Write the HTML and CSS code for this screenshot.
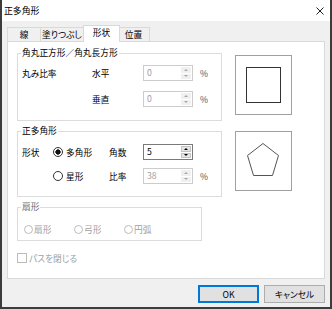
FILE: index.html
```html
<!DOCTYPE html>
<html lang="ja">
<head>
  <meta charset="UTF-8">
  <meta name="viewport" content="width=device-width, initial-scale=1.0">
  <title>正多角形</title>
  <link rel="stylesheet" href="styles.css">
</head>
<body>
  <div class="window">
    <div class="titlebar">
      <span class="title">正多角形</span>
      <svg class="close" width="8" height="8" viewBox="0 0 8 8">
        <path d="M0.5 0.5L7.5 7.5M7.5 0.5L0.5 7.5" stroke="#222" stroke-width="1"/>
      </svg>
    </div>
    <div class="dialog">
      <div class="tabs">
        <div class="tab tab-line">線</div>
        <div class="tab tab-fill">塗りつぶし</div>
        <div class="tab tab-shape">形状</div>
        <div class="tab tab-pos">位置</div>
      </div>
      <div class="panel">
        <div class="left">
          <fieldset class="group round">
            <legend>角丸正方形／角丸長方形</legend>
            <div class="row">
              <span>丸み比率</span>
              <span>水平</span>
              <div class="spin disabled">
                <span class="val">0</span>
                <span class="arrows"><i class="up"></i><i class="down"></i></span>
              </div>
              <span class="unit">%</span>
            </div>
            <div class="row">
              <span></span>
              <span>垂直</span>
              <div class="spin disabled">
                <span class="val">0</span>
                <span class="arrows"><i class="up"></i><i class="down"></i></span>
              </div>
              <span class="unit">%</span>
            </div>
          </fieldset>

          <fieldset class="group poly">
            <legend>正多角形</legend>
            <div class="row">
              <span>形状</span>
              <label class="opt"><span class="radio checked"></span>多角形</label>
              <span>角数</span>
              <div class="spin">
                <span class="val">5</span>
                <span class="arrows"><i class="up"></i><i class="down"></i></span>
              </div>
            </div>
            <div class="row">
              <span></span>
              <label class="opt"><span class="radio"></span>星形</label>
              <span>比率</span>
              <div class="spin disabled">
                <span class="val">38</span>
                <span class="arrows"><i class="up"></i><i class="down"></i></span>
              </div>
              <span class="unit">%</span>
            </div>
          </fieldset>

          <fieldset class="group fan">
            <legend>扇形</legend>
            <div class="row">
              <label class="opt"><span class="radio"></span>扇形</label>
              <label class="opt"><span class="radio"></span>弓形</label>
              <label class="opt"><span class="radio"></span>円弧</label>
            </div>
          </fieldset>

          <label class="check"><span class="box"></span>パスを閉じる</label>
        </div>

        <div class="right">
          <div class="preview">
            <div class="square"></div>
          </div>
          <div class="preview">
            <svg width="55" height="58" viewBox="0 0 55 58">
              <polygon points="27,11.5 42.5,23.5 36.5,43.5 17.5,43.5 11.5,23.5" fill="none" stroke="#555" stroke-width="1"/>
            </svg>
          </div>
        </div>
      </div>
      <div class="buttons">
        <button class="btn default">OK</button>
        <button class="btn">キャンセル</button>
      </div>
    </div>
  </div>
</body>
</html>
```

FILE: styles.css
```css
body {
  margin: 0;
  font-family: "Noto Sans CJK JP", sans-serif;
  font-size: 8.7px;
  font-feature-settings: "palt";
  color: #000;
}
.window {
  width: 332px;
  height: 309px;
  box-sizing: border-box;
  border: 2px solid #3c3c3c;
  border-top: 0;
  background: #f0f0f0;
  display: flex;
  flex-direction: column;
}
.titlebar {
  height: 21px;
  flex: none;
  background: #fff;
  display: flex;
  align-items: center;
  justify-content: space-between;
  padding: 0 6px 0 2px;
}
.title {
  font-size: 8.9px;
}
.dialog {
  flex: 1;
  padding: 4px 5px;
  display: flex;
  flex-direction: column;
}

/* tabs */
.tabs {
  display: flex;
  align-items: flex-end;
  height: 16px;
}
.tab {
  height: 14px;
  box-sizing: border-box;
  border: 1px solid #d9d9d9;
  border-bottom: 0;
  background: #f0f0f0;
  text-align: center;
  line-height: 13px;
}
.tab + .tab {
  margin-left: -1px;
}
.tab-line { width: 34px; }
.tab-fill { width: 44px; }
.tab-shape {
  width: 37px;
  height: 17px;
  margin-left: -2px;
  margin-bottom: -1px;
  background: #fff;
  line-height: 14px;
  position: relative;
  z-index: 1;
}
.tab + .tab-pos {
  width: 33px;
  margin-left: -3px;
}

.panel {
  height: 238px;
  box-sizing: border-box;
  border: 1px solid #d9d9d9;
  background: #fff;
  padding: 5px 0 0 9px;
  display: grid;
  grid-template-columns: 205px 57px;
  column-gap: 13px;
  align-items: start;
}
.left {
  display: flex;
  flex-direction: column;
}

/* group boxes */
.group {
  margin: 0;
  padding: 6px 4px 13px;
  border: 1px solid #dcdcdc;
  min-width: 0;
}
.group legend {
  padding: 0 1px;
  margin-left: -1px;
  line-height: 12px;
}
.group + .group {
  margin-top: 4px;
}
.row {
  display: grid;
  align-items: center;
  height: 16px;
}
.round .row {
  grid-template-columns: 70px 51px 50px auto;
}
.round .row + .row {
  margin-top: 10px;
}
.poly {
  padding-top: 7px;
  padding-bottom: 12px;
}
.poly .row {
  grid-template-columns: 31px 56px 34px 50px auto;
}
.poly .row + .row {
  margin-top: 8px;
}
.fan {
  width: 185px;
  box-sizing: border-box;
  padding-top: 10px;
  padding-bottom: 5px;
}
.fan legend {
  color: #6d6d6d;
}
.fan .row {
  display: flex;
  height: 12px;
  padding-left: 2px;
  color: #a0a0a0;
}
.fan .opt {
  width: 50px;
  gap: 1px;
}
.unit {
  margin-left: 7px;
  color: #555;
}

/* spin boxes */
.spin {
  display: flex;
  width: 50px;
  height: 16px;
  box-sizing: border-box;
  border: 1px solid #7a7a7a;
  background: #fff;
}
.spin .val {
  flex: 1;
  padding-left: 3px;
  line-height: 14px;
}
.spin .arrows {
  width: 12px;
  display: flex;
  flex-direction: column;
  gap: 1px;
  padding: 1px;
  box-sizing: border-box;
}
.spin .arrows i {
  flex: 1;
  display: flex;
  align-items: center;
  justify-content: center;
  background: #e5e5e5;
  border: 1px solid #c4c4c4;
}
.spin .arrows i::before {
  content: "";
  border-left: 2px solid transparent;
  border-right: 2px solid transparent;
}
.spin .up::before {
  border-bottom: 2px solid #000;
}
.spin .down::before {
  border-top: 2px solid #000;
}
.spin.disabled {
  border-color: #cccccc;
}
.spin.disabled .val {
  color: #a0a0a0;
}
.spin.disabled .arrows i {
  background: #f0f0f0;
  border-color: #f0f0f0;
}
.spin.disabled .up::before {
  border-bottom-color: #a8a8a8;
}
.spin.disabled .down::before {
  border-top-color: #a8a8a8;
}

/* radios, checkbox */
.opt {
  display: flex;
  align-items: center;
  gap: 3px;
}
.radio {
  width: 10px;
  height: 10px;
  box-sizing: border-box;
  border: 1px solid #333;
  border-radius: 50%;
  background: #fff;
}
.radio.checked {
  background: radial-gradient(circle, #111 2.4px, #fff 2.9px);
}
.fan .radio {
  width: 9px;
  height: 9px;
  border-color: #bcbcbc;
}
.check {
  display: flex;
  align-items: center;
  gap: 2px;
  height: 12px;
  margin-top: 11px;
  color: #a0a0a0;
}
.check .box {
  width: 10px;
  height: 10px;
  box-sizing: border-box;
  border: 1px solid #bcbcbc;
}

/* previews */
.right {
  padding-top: 8px;
  display: flex;
  flex-direction: column;
  gap: 16px;
}
.preview {
  width: 57px;
  height: 60px;
  box-sizing: border-box;
  border: 1px solid #a0a0a0;
  display: flex;
  align-items: center;
  justify-content: center;
}
.square {
  width: 35px;
  height: 36px;
  box-sizing: border-box;
  border: 1px solid #333;
}

/* buttons */
.buttons {
  display: flex;
  justify-content: flex-end;
  gap: 5px;
  margin-top: 6px;
}
.btn {
  width: 61px;
  height: 18px;
  padding: 0;
  font: inherit;
  background: #e1e1e1;
  border: 1px solid #adadad;
  color: #000;
}
.btn.default {
  border-color: #0078d7;
  box-shadow: inset 0 0 0 1px #0078d7;
}
```
